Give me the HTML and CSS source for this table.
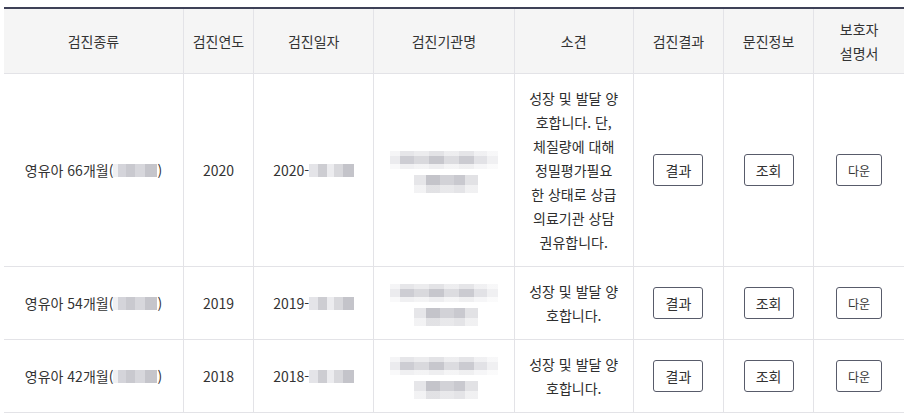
FILE: index.html
```html
<!DOCTYPE html>
<html lang="ko">
<head>
  <meta charset="UTF-8">
  <title>검진 내역</title>
  <link rel="stylesheet" href="styles.css">
</head>
<body>
<table class="exam-table">
  <colgroup>
    <col class="c-type"><col class="c-year"><col class="c-date"><col class="c-org">
    <col class="c-note"><col class="c-btn"><col class="c-btn"><col class="c-btn">
  </colgroup>
  <thead>
    <tr>
      <th>검진종류</th>
      <th>검진연도</th>
      <th>검진일자</th>
      <th>검진기관명</th>
      <th>소견</th>
      <th>검진결과</th>
      <th>문진정보</th>
      <th>보호자<br>설명서</th>
    </tr>
  </thead>
  <tbody>
    <tr>
      <td>영유아 66개월(<span class="blur blur-name"></span>)</td>
      <td>2020</td>
      <td>2020-<span class="blur blur-date"></span></td>
      <td class="org"><span class="blur blur-org1"></span><br><span class="blur blur-org2"></span></td>
      <td class="note">성장 및 발달 양<br>호합니다. 단,<br>체질량에 대해<br>정밀평가필요<br>한 상태로 상급<br>의료기관 상담<br>권유합니다.</td>
      <td><button class="btn">결과</button></td>
      <td><button class="btn">조회</button></td>
      <td><button class="btn btn-sm">다운</button></td>
    </tr>
    <tr>
      <td>영유아 54개월(<span class="blur blur-name"></span>)</td>
      <td>2019</td>
      <td>2019-<span class="blur blur-date"></span></td>
      <td class="org"><span class="blur blur-org1"></span><br><span class="blur blur-org2"></span></td>
      <td class="note">성장 및 발달 양<br>호합니다.</td>
      <td><button class="btn">결과</button></td>
      <td><button class="btn">조회</button></td>
      <td><button class="btn btn-sm">다운</button></td>
    </tr>
    <tr>
      <td>영유아 42개월(<span class="blur blur-name"></span>)</td>
      <td>2018</td>
      <td>2018-<span class="blur blur-date"></span></td>
      <td class="org"><span class="blur blur-org1"></span><br><span class="blur blur-org2"></span></td>
      <td class="note">성장 및 발달 양<br>호합니다.</td>
      <td><button class="btn">결과</button></td>
      <td><button class="btn">조회</button></td>
      <td><button class="btn btn-sm">다운</button></td>
    </tr>
  </tbody>
</table>
</body>
</html>
```

FILE: styles.css
```css
body {
  margin: 0;
  background: #fff;
  color: #333;
  font-family: "Noto Sans CJK KR", "Noto Sans", sans-serif;
  font-size: 14px;
}
.exam-table {
  margin: 7px 0 0 4px;
  width: 900px;
  border-collapse: collapse;
  table-layout: fixed;
  border-top: 2px solid #3e4157;
}
.c-type { width: 179px; }
.c-year { width: 70px; }
.c-date { width: 120px; }
.c-org { width: 140px; }
.c-note { width: 119px; }
.c-btn { width: 90px; }
th, td {
  text-align: center;
  vertical-align: middle;
  border-left: 1px solid #e3e3e7;
  border-bottom: 1px solid #e3e3e7;
  line-height: 24px;
}
th:first-child, td:first-child { border-left: none; }
th {
  background: #f5f5f5;
  font-weight: normal;
  padding: 8px 4px;
  height: 48px;
}
td {
  padding: 12px 6px;
}
.note { color: #2e2e2e; }
.btn {
  background: #fff;
  color: #333;
  border: 1px solid #585b6a;
  border-radius: 3px;
  font-family: inherit;
  font-size: 14px;
  width: 50px;
  height: 32px;
  padding: 0;
  cursor: pointer;
}
.btn-sm {
  font-size: 12px;
  width: 46px;
}
.blur {
  display: inline-block;
  height: 13px;
  vertical-align: -1px;
}
.org .blur { height: 18px; vertical-align: middle; }
.blur-name {
  width: 44px;
  background: linear-gradient(90deg, #f0f0f2 0 12%, #d4d4da 12% 30%, #c9c9cf 30% 50%, #d7d7dc 50% 72%, #c5c5cb 72% 100%);
}
.blur-date {
  width: 45px;
  background: linear-gradient(90deg, #e4e4e8 0 20%, #cdcdd2 20% 40%, #ececef 40% 55%, #d8d8dc 55% 75%, #c4c4ca 75% 100%);
}
.blur-org1 {
  width: 108px;
  background: linear-gradient(180deg, rgba(255,255,255,0.5) 0 30%, transparent 30% 70%, rgba(255,255,255,0.7) 70%),
    linear-gradient(90deg, #ebebee 0 9%, #cdcdd3 9% 22%, #d9d9dd 22% 36%, #c7c7cd 36% 50%, #dcdce0 50% 64%, #cbcbd1 64% 78%, #e2e2e6 78% 90%, #f0f0f2 90% 100%);
}
.blur-org2 {
  width: 64px;
  margin-left: 4px;
  background: linear-gradient(180deg, transparent 0 55%, rgba(255,255,255,0.5) 55%),
    linear-gradient(90deg, #e6e6e9 0 18%, #c4c4ca 18% 40%, #d2d2d7 40% 62%, #c9c9cf 62% 80%, #e2e2e5 80% 100%);
}
```
